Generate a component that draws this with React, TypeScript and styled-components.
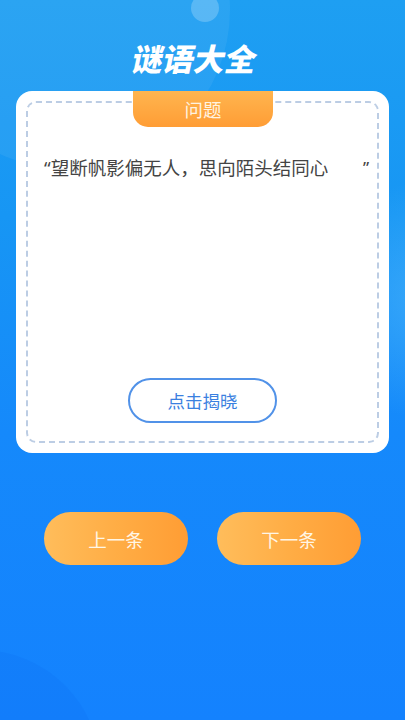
import React from "react";
import styled, { createGlobalStyle } from "styled-components";

const GlobalStyle = createGlobalStyle`
  * { box-sizing: border-box; }
  html, body { margin: 0; padding: 0; }
  body {
    width: 405px;
    font-family: "Noto Sans", "Noto Sans CJK SC", sans-serif;
    background: #1584fd;
  }
`;

const Page = styled.div`
  position: relative;
  width: 405px;
  height: 720px;
  overflow: hidden;
  display: flex;
  flex-direction: column;
  align-items: center;
  background: linear-gradient(180deg, #1e9ff2 0%, #1796f4 30%, #1589fb 60%, #1482fe 100%);
`;

const Glow = styled.div<{ $x: number; $y: number; $size: number; $color: string }>`
  position: absolute;
  left: ${(p) => p.$x}px;
  top: ${(p) => p.$y}px;
  width: ${(p) => p.$size}px;
  height: ${(p) => p.$size}px;
  border-radius: 50%;
  background: ${(p) => p.$color};
  pointer-events: none;
`;

const Title = styled.h1`
  position: relative;
  margin: 40px 16px 0 0;
  height: 36px;
  line-height: 36px;
  font-family: "Noto Sans CJK SC", sans-serif;
  font-size: 31px;
  font-weight: 900;
  letter-spacing: 0;
  color: #ffffff;
  transform: skewX(-12deg);
`;

const Card = styled.section`
  position: relative;
  margin-top: 15px;
  width: 373px;
  height: 362px;
  padding: 10px;
  border-radius: 16px;
  background: #ffffff;
`;

const Frame = styled.div`
  height: 100%;
  border: 2px dashed #bccde4;
  border-radius: 10px;
  display: flex;
  flex-direction: column;
  align-items: center;
`;

const Tab = styled.div`
  position: absolute;
  top: 0;
  left: 117px;
  width: 140px;
  height: 36px;
  border-radius: 0 0 15px 15px;
  background: linear-gradient(180deg, #ffb54f 0%, #ff9d35 100%);
  color: #fff3e0;
  font-family: "Noto Sans CJK SC", sans-serif;
  font-size: 18.5px;
  line-height: 36px;
  text-align: center;
`;

const QuoteRow = styled.p`
  align-self: stretch;
  margin: 53px 0 0;
  padding: 0 8px 0 16px;
  display: flex;
  justify-content: space-between;
  font-size: 18.5px;
  line-height: 24px;
  color: #444444;
`;

const CloseQuote = styled.span`
  font-size: 17px;
`;

const RevealButton = styled.button`
  margin-top: auto;
  margin-bottom: 18px;
  width: 149px;
  height: 45px;
  border: 2px solid #5192e8;
  border-radius: 23px;
  background: #ffffff;
  color: #3a80e0;
  font-family: "Noto Sans CJK SC", sans-serif;
  font-size: 17.5px;
  cursor: pointer;
`;

const NavRow = styled.div`
  position: relative;
  margin-top: 59px;
  display: flex;
  gap: 29px;
`;

const NavButton = styled.button`
  width: 144px;
  height: 53px;
  border: none;
  border-radius: 27px;
  background: linear-gradient(90deg, #ffbd5b 0%, #ffad45 50%, #ff9d34 100%);
  color: #fff6e6;
  font-family: "Noto Sans CJK SC", sans-serif;
  font-size: 18.5px;
  cursor: pointer;
`;

export default function App() {
  return (
    <>
      <GlobalStyle />
      <Page>
        <Glow $x={-90} $y={-150} $size={320} $color="rgba(255,255,255,0.06)" />
        <Glow $x={191} $y={-6} $size={28} $color="rgba(255,255,255,0.22)" />
        <Glow $x={300} $y={170} $size={260} $color="radial-gradient(circle, rgba(120,210,255,0.35) 0%, rgba(120,210,255,0) 65%)" />
        <Glow $x={-140} $y={650} $size={240} $color="rgba(10,90,230,0.1)" />
        <Title>谜语大全</Title>
        <Card>
          <Frame>
            <QuoteRow>
              <span>“望断帆影偏无人，思向陌头结同心</span>
              <CloseQuote>”</CloseQuote>
            </QuoteRow>
            <RevealButton>点击揭晓</RevealButton>
          </Frame>
          <Tab>问题</Tab>
        </Card>
        <NavRow>
          <NavButton>上一条</NavButton>
          <NavButton>下一条</NavButton>
        </NavRow>
      </Page>
    </>
  );
}
